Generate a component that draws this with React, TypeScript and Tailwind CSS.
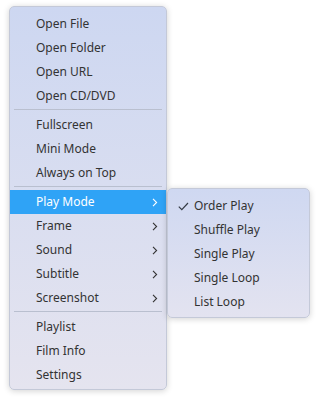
import React from "react";

type Item = { label: string; sub?: boolean; active?: boolean } | "sep";

const mainItems: Item[] = [
  { label: "Open File" },
  { label: "Open Folder" },
  { label: "Open URL" },
  { label: "Open CD/DVD" },
  "sep",
  { label: "Fullscreen" },
  { label: "Mini Mode" },
  { label: "Always on Top" },
  "sep",
  { label: "Play Mode", sub: true, active: true },
  { label: "Frame", sub: true },
  { label: "Sound", sub: true },
  { label: "Subtitle", sub: true },
  { label: "Screenshot", sub: true },
  "sep",
  { label: "Playlist" },
  { label: "Film Info" },
  { label: "Settings" },
];

const subItems = ["Order Play", "Shuffle Play", "Single Play", "Single Loop", "List Loop"];

function Chevron({ color }: { color: string }) {
  return (
    <svg width="6" height="9" viewBox="0 0 6 9" className="shrink-0">
      <path d="M1 0.8 L4.6 4.5 L1 8.2" fill="none" stroke={color} strokeWidth="1.1" />
    </svg>
  );
}

function Check() {
  return (
    <svg width="11" height="9" viewBox="0 0 11 9" className="shrink-0">
      <path d="M0.8 4.6 L3.8 7.6 L10 1" fill="none" stroke="#333a44" strokeWidth="1.2" />
    </svg>
  );
}

export default function App() {
  return (
    <div
      className="relative w-[319px] h-[401px] bg-white"
      style={{ fontFamily: '"Noto Sans", "Open Sans", sans-serif' }}
    >
      <div className="absolute left-[9px] top-[6px] w-[158px] rounded-[5px] border border-[#c4c9d8] bg-gradient-to-b from-[#cdd7f1] to-[#e5e4ef] pt-[5px] pb-[2px] shadow-[0_1px_6px_rgba(0,0,0,0.18)]">
        {mainItems.map((it, i) =>
          it === "sep" ? (
            <div key={i} className="h-[5px] pt-[1px] px-[4px]">
              <div className="h-px bg-[#b9bfcf]" />
            </div>
          ) : (
            <div
              key={i}
              className={`flex h-[24px] items-center justify-between pl-[26px] pr-[8px] text-[12px] ${
                it.active ? "bg-[#2fa3f6] text-white" : "text-[#333333]"
              }`}
            >
              <span>{it.label}</span>
              {it.sub && <Chevron color={it.active ? "#ffffff" : "#333333"} />}
            </div>
          )
        )}
      </div>

      <div className="absolute left-[167px] top-[188px] w-[143px] rounded-[5px] border border-[#c4c9d8] bg-gradient-to-b from-[#cfd8f1] to-[#e3e3f0] pt-[5px] pb-[3px] shadow-[0_1px_6px_rgba(0,0,0,0.18)]">
        {subItems.map((s, i) => (
          <div key={s} className="flex h-[24px] items-center text-[12px] text-[#333333]">
            <div className="w-[26px] flex justify-end pr-[5px]">{i === 0 && <Check />}</div>
            <span>{s}</span>
          </div>
        ))}
      </div>
    </div>
  );
}
